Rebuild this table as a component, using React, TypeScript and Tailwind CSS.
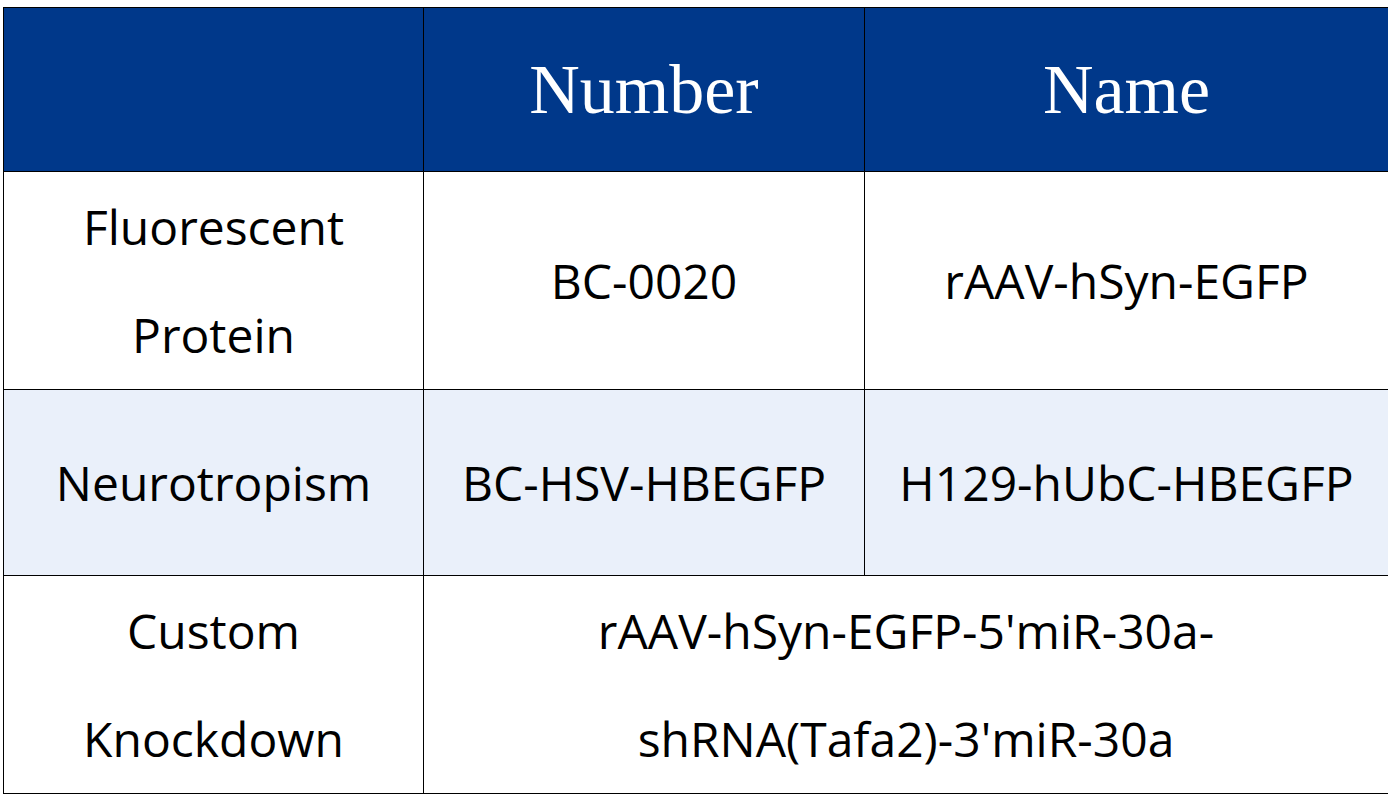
const rows = [
  { label: ['Fluorescent', 'Protein'], number: 'BC-0020', name: 'rAAV-hSyn-EGFP', tall: true, shaded: false },
  { label: ['Neurotropism'], number: 'BC-HSV-HBEGFP', name: 'H129-hUbC-HBEGFP', tall: false, shaded: true },
];

export default function App() {
  return (
    <div className="w-[1388px] h-[800px] overflow-hidden bg-white pt-[7px] pl-[3px]">
      <table className="border-collapse w-[1385px] table-fixed font-['Open_Sans','Liberation_Sans',sans-serif] text-[48px] text-black">
        <colgroup>
          <col className="w-[420px]" />
          <col className="w-[441px]" />
          <col className="w-[524px]" />
        </colgroup>
        <thead>
          <tr className="h-[164px] bg-[#00388a] text-white font-['Liberation_Serif',serif] text-[70px]">
            <th className="border border-black font-normal"></th>
            <th className="border border-black font-normal">Number</th>
            <th className="border border-black font-normal">Name</th>
          </tr>
        </thead>
        <tbody>
          {rows.map((r) => (
            <tr key={r.number} className={`${r.tall ? 'h-[218px]' : 'h-[186px]'} ${r.shaded ? 'bg-[#eaf0fa]' : 'bg-white'}`}>
              <td className="border border-black text-center leading-[108px]">
                {r.label.map((l) => (
                  <div key={l}>{l}</div>
                ))}
              </td>
              <td className="border border-black text-center">{r.number}</td>
              <td className="border border-black text-center">{r.name}</td>
            </tr>
          ))}
          <tr className="h-[218px] bg-white">
            <td className="border border-black text-center leading-[108px]">
              <div>Custom</div>
              <div>Knockdown</div>
            </td>
            <td colSpan={2} className="border border-black text-center leading-[108px]">
              <div>rAAV-hSyn-EGFP-5'miR-30a-</div>
              <div>shRNA(Tafa2)-3'miR-30a</div>
            </td>
          </tr>
        </tbody>
      </table>
    </div>
  );
}
